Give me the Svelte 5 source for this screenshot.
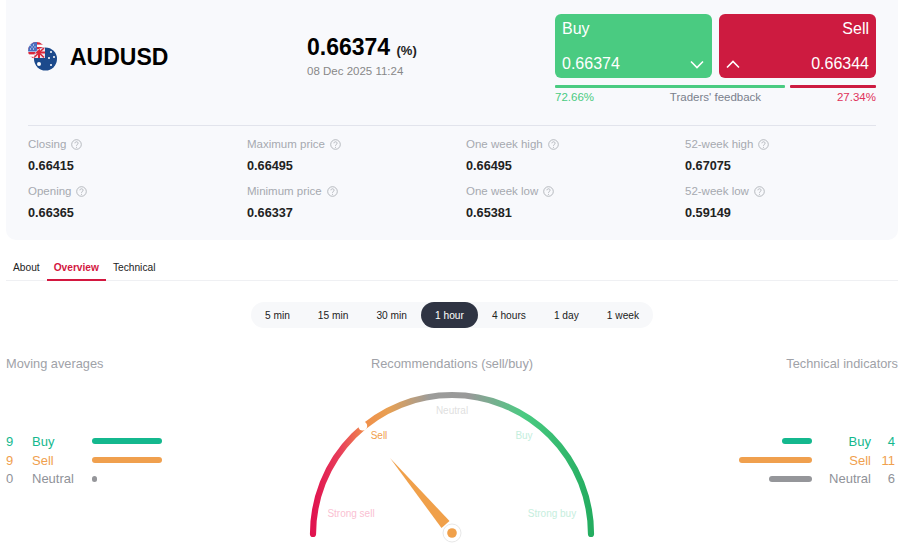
<script lang="ts">
	const stats = [
		{ label: 'Closing', value: '0.66415' },
		{ label: 'Maximum price', value: '0.66495' },
		{ label: 'One week high', value: '0.66495' },
		{ label: '52-week high', value: '0.67075' },
		{ label: 'Opening', value: '0.66365' },
		{ label: 'Minimum price', value: '0.66337' },
		{ label: 'One week low', value: '0.65381' },
		{ label: '52-week low', value: '0.59149' }
	];
	const periods = ['5 min', '15 min', '30 min', '1 hour', '4 hours', '1 day', '1 week'];
	const tabs = ['About', 'Overview', 'Technical'];
	const moving = [
		{ name: 'Buy', count: 9, width: 70, kind: 'buy' },
		{ name: 'Sell', count: 9, width: 70, kind: 'sell' },
		{ name: 'Neutral', count: 0, width: 5, kind: 'neutral' }
	];
	const indicators = [
		{ name: 'Buy', count: 4, width: 30, kind: 'buy' },
		{ name: 'Sell', count: 11, width: 73, kind: 'sell' },
		{ name: 'Neutral', count: 6, width: 43, kind: 'neutral' }
	];
</script>

<main class="page">
	<section class="card">
		<header class="head">
			<div class="symbol">
				<svg class="flag" width="30" height="29" viewBox="0 0 30 29" aria-hidden="true">
					<defs>
						<clipPath id="us"><circle cx="8.5" cy="8.5" r="8.5" /></clipPath>
						<clipPath id="au"><circle cx="17.5" cy="17" r="11.5" /></clipPath>
					</defs>
					<g clip-path="url(#us)">
						<rect width="18" height="18" fill="#fff" />
						<rect y="0" width="18" height="2.6" fill="#d9283c" />
						<rect y="5" width="18" height="2.4" fill="#d9283c" />
						<rect y="10" width="18" height="2.4" fill="#d9283c" />
						<rect y="14.8" width="18" height="2.4" fill="#d9283c" />
						<rect width="9" height="9.5" fill="#4a6fc0" />
						<path d="M2 3h1M5 3h1M3.5 5h1M6.5 5h1M2 7h1M5 7h1" stroke="#fff" stroke-width="1" />
					</g>
					<circle cx="17.5" cy="17" r="12" fill="#fff" />
					<g clip-path="url(#au)">
						<rect x="5" y="5" width="25" height="25" fill="#1c4a8c" />
						<rect x="5" y="5" width="12" height="11" fill="#f2e6ea" />
						<path d="M6 6l10 9.5M16 6L6 15.5" stroke="#d9283c" stroke-width="1.6" />
						<path d="M11 5v11M5 10.5h12" stroke="#d9283c" stroke-width="2" />
						<circle cx="11" cy="22" r="2" fill="#fff" />
						<circle cx="23" cy="10" r="1" fill="#fff" />
						<circle cx="26" cy="15" r="1" fill="#fff" />
						<circle cx="21" cy="16" r="1" fill="#fff" />
						<circle cx="23" cy="23" r="1" fill="#fff" />
					</g>
				</svg>
				<h1>AUDUSD</h1>
			</div>
			<div class="quote">
				<div class="price">0.66374 <small>(%)</small></div>
				<div class="date">08 Dec 2025 11:24</div>
			</div>
			<div class="trade">
				<div class="buttons">
					<button type="button" class="btn buy">
						<span class="btn-name">Buy</span>
						<span class="btn-row">
							<span>0.66374</span>
							<svg width="14" height="9" viewBox="0 0 14 9" aria-hidden="true"><path d="M1 1.5l6 6 6-6" /></svg>
						</span>
					</button>
					<button type="button" class="btn sell">
						<span class="btn-name">Sell</span>
						<span class="btn-row">
							<svg width="14" height="9" viewBox="0 0 14 9" aria-hidden="true"><path d="M1 7.5l6-6 6 6" /></svg>
							<span>0.66344</span>
						</span>
					</button>
				</div>
				<div class="ratio">
					<i class="ratio-buy"></i>
					<i class="ratio-sell"></i>
				</div>
				<div class="feedback">
					<span class="pct-buy">72.66%</span>
					<span class="feedback-name">Traders' feedback</span>
					<span class="pct-sell">27.34%</span>
				</div>
			</div>
		</header>

		<div class="stats">
			{#each stats as stat}
				<div class="stat">
					<div class="stat-label">
						{stat.label}
						<svg width="11" height="11" viewBox="0 0 11 11" aria-hidden="true">
							<circle cx="5.5" cy="5.5" r="4.8" />
							<path d="M3.9 4.3c0-2 3.2-2 3.2-.1 0 1.2-1.6 1.2-1.6 2.6" />
							<circle class="dot" cx="5.5" cy="8.2" r=".5" />
						</svg>
					</div>
					<div class="stat-value">{stat.value}</div>
				</div>
			{/each}
		</div>
	</section>

	<nav class="tabs">
		{#each tabs as tab}
			<span class="tab" class:active={tab === 'Overview'}>{tab}</span>
		{/each}
	</nav>

	<div class="periods-wrap">
		<div class="periods">
			{#each periods as period}
				<span class="period" class:active={period === '1 hour'}>{period}</span>
			{/each}
		</div>
	</div>

	<section class="overview">
		<div class="side">
			<h2>Moving averages</h2>
			<div class="legend">
				{#each moving as row}
					<div class="row {row.kind}">
						<span class="count">{row.count}</span>
						<span class="name">{row.name}</span>
						<i class="bar" style="width: {row.width}px"></i>
					</div>
				{/each}
			</div>
		</div>

		<div class="center">
			<h2>Recommendations (sell/buy)</h2>
			<svg class="gauge" width="300" height="160" viewBox="302 386 300 160" aria-hidden="true">
				<defs>
					<linearGradient id="arc" gradientUnits="userSpaceOnUse" x1="313" y1="0" x2="591" y2="0">
						<stop offset="0" stop-color="#e0134f" />
						<stop offset=".1" stop-color="#e8405a" />
						<stop offset=".19" stop-color="#f08f4a" />
						<stop offset=".27" stop-color="#e8a052" />
						<stop offset=".42" stop-color="#9c9c9a" />
						<stop offset=".56" stop-color="#999" />
						<stop offset=".76" stop-color="#4acb82" />
						<stop offset="1" stop-color="#24ad60" />
					</linearGradient>
				</defs>
				<path class="arc" d="M313 533A139 139 0 0 1 591 533" stroke="url(#arc)" />
				<circle cx="362.7" cy="425" r="4.5" fill="#fff" />
				<text x="452" y="412.5" fill="#dfdfdf">Neutral</text>
				<text x="379" y="438" fill="#f0a04e">Sell</text>
				<text x="524" y="438" fill="#c4eedd">Buy</text>
				<text x="351" y="516" fill="#fabfd2">Strong sell</text>
				<text x="552" y="516" fill="#c6eedd">Strong buy</text>
				<path d="M390 457L441.5 527L449.5 520Z" fill="#f0a04a" />
				<circle cx="452" cy="532" r="9" fill="#fff" stroke="#e8e8e8" />
				<circle cx="452" cy="532" r="4.8" fill="#f0a04a" />
			</svg>
		</div>

		<div class="side right">
			<h2>Technical indicators</h2>
			<div class="legend">
				{#each indicators as row}
					<div class="row {row.kind}">
						<i class="bar" style="width: {row.width}px"></i>
						<span class="name">{row.name}</span>
						<span class="count">{row.count}</span>
					</div>
				{/each}
			</div>
		</div>
	</section>
</main>

<style>
	:global(body) {
		margin: 0;
		background: #fff;
		font-family: 'Liberation Sans', Arial, sans-serif;
		overflow: hidden;
	}

	.page {
		width: 892px;
		height: 544px;
		margin-left: 6px;
		overflow: hidden;
	}

	.card {
		height: 240px;
		box-sizing: border-box;
		padding: 14px 22px 0;
		background: #f8f9fc;
		border-radius: 0 0 10px 10px;
	}

	.head {
		display: flex;
		height: 111px;
		border-bottom: 1px solid #e2e4ec;
	}

	.symbol {
		display: flex;
		align-items: center;
		gap: 12px;
		width: 279px;
		height: 86px;
	}

	.flag {
		flex: none;
		margin-top: -1px;
	}

	h1 {
		margin: 0;
		font-size: 23px;
		font-weight: 700;
		color: #000;
	}

	.quote {
		width: 248px;
		padding-top: 20px;
	}

	.price {
		font-size: 23px;
		font-weight: 700;
		line-height: 27px;
		color: #000;
	}

	.price small {
		font-size: 13px;
		color: #222;
	}

	.date {
		margin-top: 1px;
		font-size: 11.5px;
		color: #888;
	}

	.trade {
		width: 321px;
	}

	.buttons {
		display: flex;
		gap: 7px;
	}

	.btn {
		flex: 1;
		display: flex;
		flex-direction: column;
		justify-content: space-between;
		height: 64px;
		padding: 6px 7px 5px;
		border: 0;
		border-radius: 6px;
		color: #fff;
		font: inherit;
		font-size: 16px;
	}

	.btn.buy {
		background: #4acb81;
		text-align: left;
	}

	.btn.sell {
		background: #cd1b40;
		text-align: right;
	}

	.btn-name {
		display: block;
		width: 100%;
	}

	.btn-row {
		display: flex;
		width: 100%;
		align-items: center;
		justify-content: space-between;
	}

	.btn-row svg {
		fill: none;
		stroke: #fff;
		stroke-width: 1.6;
	}

	.buy .btn-row svg {
		margin-right: 1px;
	}

	.ratio {
		display: flex;
		gap: 5px;
		margin-top: 7px;
	}

	.ratio i {
		height: 3px;
		border-radius: 1px;
	}

	.ratio-buy {
		width: 230px;
		background: #4acb81;
	}

	.ratio-sell {
		width: 86px;
		background: #cd1b40;
	}

	.feedback {
		display: flex;
		justify-content: space-between;
		margin-top: 2px;
		font-size: 11.5px;
		line-height: 14px;
	}

	.pct-buy {
		color: #4acb81;
	}

	.pct-sell {
		color: #e0305a;
	}

	.feedback-name {
		color: #7a7f8c;
	}

	.stats {
		display: grid;
		grid-template-columns: repeat(4, 219px);
		row-gap: 10px;
		padding-top: 11px;
		margin-right: -28px;
	}

	.stat-label {
		display: flex;
		align-items: center;
		gap: 5px;
		font-size: 11.5px;
		line-height: 14px;
		color: #a6a9b0;
	}

	.stat-label svg {
		fill: none;
		stroke: #a6a9b0;
		stroke-width: 0.8;
	}

	.stat-label .dot {
		fill: #a6a9b0;
		stroke: none;
	}

	.stat-value {
		margin-top: 8px;
		font-size: 12.7px;
		font-weight: 700;
		line-height: 15px;
		color: #222;
	}

	.tabs {
		display: flex;
		height: 41px;
		box-sizing: border-box;
		padding-top: 13px;
		border-bottom: 1px solid #eff0f3;
	}

	.tab {
		height: 28px;
		box-sizing: border-box;
		padding: 9px 7px 0;
		font-size: 10.2px;
		color: #222;
	}

	.tab.active {
		border-bottom: 2px solid #d3173f;
		color: #d3173f;
		font-weight: 700;
	}

	.periods-wrap {
		display: flex;
		justify-content: center;
		padding-top: 21px;
	}

	.periods {
		display: flex;
		height: 26px;
		align-items: center;
		border-radius: 13px;
		background: #f7f8fa;
	}

	.period {
		height: 26px;
		padding: 0 14px;
		font-size: 10.2px;
		line-height: 27px;
		color: #222;
	}

	.period.active {
		border-radius: 13px;
		background: #2f3443;
		color: #fff;
	}

	.overview {
		display: grid;
		grid-template-columns: 1fr 300px 1fr;
		padding-top: 28px;
	}

	h2 {
		margin: 0;
		font-size: 12.8px;
		font-weight: 400;
		line-height: 15px;
		color: #a0a2a8;
	}

	.center {
		display: flex;
		flex-direction: column;
		align-items: center;
	}

	.gauge {
		display: block;
		margin-top: 16px;
	}

	.gauge text {
		font-size: 10px;
		text-anchor: middle;
	}

	.arc {
		fill: none;
		stroke-width: 6.2;
		stroke-linecap: round;
	}

	.legend {
		display: grid;
		gap: 0;
		margin-top: 61px;
	}

	.right {
		text-align: right;
	}

	.row {
		display: flex;
		align-items: center;
		height: 18.7px;
		font-size: 13px;
	}

	.right .row {
		justify-content: flex-end;
	}

	.count {
		width: 26px;
	}

	.name {
		width: 60px;
	}

	.right .count {
		width: 24px;
		margin-right: 3px;
		text-align: right;
	}

	.right .name {
		width: 59px;
		text-align: right;
	}

	.bar {
		display: block;
		height: 6px;
		border-radius: 3px;
	}

	.row.buy {
		color: #14b88e;
	}

	.row.sell {
		color: #f0a04e;
	}

	.row.neutral {
		color: #8f9299;
	}

	.buy .bar {
		background: #14b88e;
	}

	.sell .bar {
		background: #f0a04e;
	}

	.neutral .bar {
		background: #95969a;
	}
</style>
